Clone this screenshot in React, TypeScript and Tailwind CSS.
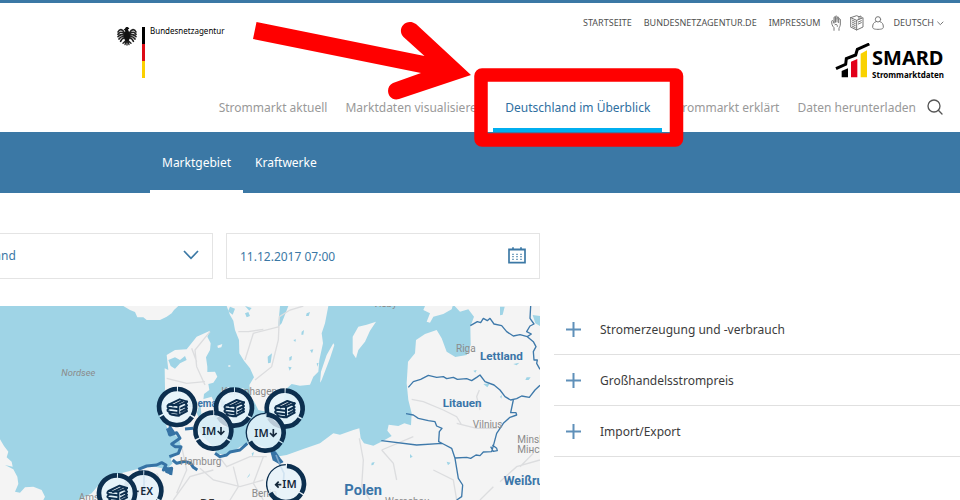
import React from "react";

const FONT = "font-['Noto_Sans','Open_Sans',sans-serif]";

function FederalLogo() {
  return (
    <a href="#bnetza" className="flex items-start pt-[23px] pl-[117px] text-black" aria-label="Bundesnetzagentur">
      <svg width="20" height="20" viewBox="0 0 60 60" aria-hidden="true">
        <g fill="none" stroke="#222" strokeWidth="5" strokeLinecap="round">
          <path d="M22 20C16 8 8 8 3 18M22 24C14 16 8 18 3 25M22 28C14 23 8 26 3 32M22 32C15 30 10 33 6 39M23 36C17 36 13 40 11 46" />
          <path d="M38 20C44 8 52 8 57 18M38 24C46 16 52 18 57 25M38 28C46 23 52 26 57 32M38 32C45 30 50 33 54 39M37 36C43 36 47 40 49 46" />
          <path d="M26 44L18 52M34 44L42 52M30 44V57M27 46L24 56M33 46L36 56" strokeWidth="4" />
        </g>
        <path d="M24 8C25 2 34 1 37 8L33 10 35 16C41 24 40 38 34 46H26C20 38 19 24 25 16L20 10Z" fill="#111" />
      </svg>
      <span className="mt-px ml-[5px] flex h-[51px] w-[3px] flex-col">
        <span className="flex-1 bg-black" />
        <span className="flex-1 bg-[#dd0b15]" />
        <span className="flex-1 bg-[#fbd000]" />
      </span>
      <span className="ml-[5px] text-[8px] leading-[10px]">Bundesnetzagentur</span>
    </a>
  );
}

function SmardLogo() {
  return (
    <a href="#start" className="mt-[10px] flex h-9 text-black">
      <svg width="36" height="36" viewBox="0 0 108 108" aria-hidden="true">
        <path d="M20 84L39 76V103H20Z" fill="#000" />
        <path d="M48 56L67 48V103H48Z" fill="#e2001a" />
        <path d="M77 32L96 22V103H77Z" fill="#f9d200" />
        <path d="M3 77L32 64L34 47L62 36L67 19L103 3" fill="none" stroke="#000" strokeWidth="9" />
      </svg>
      <span className="flex flex-col pt-0.5 pl-px font-bold">
        <span className="text-[20px] leading-[25px]">SMARD</span>
        <span className="text-[8px] leading-[9px]">Strommarktdaten</span>
      </span>
    </a>
  );
}

function UtilityBar() {
  const icon = { fill: "none", stroke: "#777", strokeWidth: 3, strokeLinejoin: "round" as const, strokeLinecap: "round" as const };
  return (
    <nav aria-label="Service" className="mt-2.5 flex h-5 items-center text-[9px] text-[#505050]">
      <a href="#startseite">STARTSEITE</a>
      <a href="#agentur" className="ml-3">BUNDESNETZAGENTUR.DE</a>
      <a href="#impressum" className="ml-3">IMPRESSUM</a>
      <a href="#gebaerden" aria-label="Gebärdensprache" className="ml-2.5">
        <svg width="11" height="16" viewBox="0 0 33 48" {...icon}>
          <path d="M9 46V38C3 32 2 26 2 19C2 16 6 16 7 19L9 25V8C9 5 13 5 13 8V22M13 20V5C13 2 18 2 18 5V21M18 12C18 4 23 4 23 9V23M23 14C24 9 28 10 28 15V27C28 34 25 36 24 40V46M12 29C17 26 19 29 19 34" />
        </svg>
      </a>
      <a href="#leicht" aria-label="Leichte Sprache" className="ml-2">
        <svg width="14" height="16" viewBox="0 0 42 48" {...icon}>
          <path d="M2 8L20 16V45L2 36ZM20 16L39 8V36L20 45M2 8L20 2L27 5V13M27 5L33 3V11M6 15L16 20M6 21L16 26M6 27L16 32M6 33L16 38M25 21L34 17M25 27L34 23" />
        </svg>
      </a>
      <a href="#konto" aria-label="Benutzerkonto" className="ml-2">
        <svg width="12" height="16" viewBox="0 0 36 48" {...icon}>
          <circle cx="18" cy="13" r="8" />
          <path d="M12 20C5 22 2 27 2 36C2 41 6 43 18 43C30 43 34 41 34 36C34 27 31 22 24 20" />
        </svg>
      </a>
      <button type="button" className="ml-2.5 flex items-center gap-[3px]">
        DEUTSCH
        <svg width="7" height="5" viewBox="0 0 21 15" {...icon}><path d="M2 3L10 11L18 3" /></svg>
      </button>
    </nav>
  );
}

function Annotation() {
  return (
    <svg className="pointer-events-none absolute top-0 right-0 z-10" width="960" height="150" viewBox="0 0 960 150" aria-hidden="true">
      <path d="M256.500 22L424.500 56L403.500 37C396 29 406 17 416 24L471 75L399 99C388 102 384 87 393 83L421 73L253 39Z" fill="#f00" />
      <rect x="481" y="75" width="195.500" height="65" rx="1" fill="none" stroke="#f00" strokeWidth="13.500" strokeLinejoin="round" />
    </svg>
  );
}

function MainNav() {
  const items = ["Strommarkt aktuell", "Marktdaten visualisieren", "Deutschland im Überblick", "Strommarkt erklärt", "Daten herunterladen"];
  return (
    <nav aria-label="Hauptmenü" className="flex h-[53px] justify-end pr-[17px] text-[12px] text-[#999]">
      {items.map((t, i) => (
        <a
          key={t}
          href={"#" + i}
          className={
            i === 2
              ? "flex items-center border-b-4 border-[#00aeef] px-3 pt-2 whitespace-nowrap text-[#2f6f9f]"
              : "flex items-center border-b-4 border-transparent px-[9px] pt-2 whitespace-nowrap"
          }
        >
          {t}
        </a>
      ))}
      <button type="button" aria-label="Suche" className="ml-0.5 pt-0.5">
        <svg width="16" height="16" viewBox="0 0 48 48" fill="none" stroke="#555" strokeWidth="4" strokeLinecap="round">
          <circle cx="21" cy="21" r="18" />
          <path d="M34 34L45 45" />
        </svg>
      </button>
    </nav>
  );
}

const RING = "#0c2f4f";

function Marker({ x, y, kind, thin }: { x: number; y: number; kind: "book" | "im" | "imleft" | "ex"; thin?: boolean }) {
  return (
    <g transform={`translate(${x} ${y})`}>
      <circle r="58" fill="#e6f3fa" fillOpacity={kind === "book" ? 0.94 : 0.8} />
      <circle r="54" fill="none" stroke={RING} strokeWidth="14" pathLength="360" strokeDasharray={thin ? "116 4 116 124" : "115 5"} transform="rotate(-87)" />
      {thin && <circle r="58" fill="none" stroke={RING} strokeWidth="4" pathLength="360" strokeDasharray="116 244" transform="rotate(153)" />}
      {kind === "book" && (
        <g fill="none" stroke="#0c2f4f" strokeWidth="6" strokeLinejoin="round" strokeLinecap="round">
          <path d="M-25 -7L8 -23L30 -16L4 -5Z" fill="#fff" />
          <path d="M-25 -7C-32 -2 -28 3 -22 3L0 6M-25 5C-32 10 -28 14 -22 14L0 17M-22 14C-26 21 -18 24 6 26M4 -5V26L30 12M30 -16L24 -12M12 4L30 -5M12 14L30 4M30 -16L26 -10L30 -5L26 0L30 4L27 8L30 12" />
          <path d="M-12 -4L16 -18" />
        </g>
      )}
      {kind === "im" && (
        <>
          <text x="-34" y="12" fontSize="33" fill="#15293c" fontWeight="600">IM</text>
          <path d="M23 -11V10M13 1L23 11L33 1" fill="none" stroke="#15293c" strokeWidth="5" />
        </>
      )}
      {kind === "imleft" && (
        <>
          <text x="-11" y="13" fontSize="33" fill="#15293c" fontWeight="600">IM</text>
          <path d="M-14 2H-31M-22 -7L-31 2L-22 11" fill="none" stroke="#15293c" strokeWidth="5" />
        </>
      )}
      {kind === "ex" && (
        <>
          <text x="-9" y="13" fontSize="32" fill="#15293c" fontWeight="600">EX</text>
          <path d="M-30 2H-14" stroke="#15293c" strokeWidth="5" />
        </>
      )}
    </g>
  );
}

function EuropeMap() {
  return (
    <svg className="mt-0.5 block w-full bg-[#9fd4e6]" viewBox="0 18 1620 582" role="img" aria-label="Karte der Marktgebiete">
      <g fill="#f4f4f4">
        <path d="M370 18L390 30L405 36L412 52L430 52L440 60L480 60L500 50L515 40L522 30L535 18Z" />
        <path d="M0 418L12 438L25 455L20 472L35 485L38 500L15 495L40 508L52 530L55 552L45 575L60 578L75 562L100 560L125 570L135 590L130 600H0Z" />
        <path d="M630 92L622 110L632 130L630 150L618 172L622 200L622 216L645 215L652 230L640 248L625 252L628 270L612 282L610 300L598 315L590 340L600 360L590 385L610 410L640 440L650 462L690 462L720 440L750 425L790 440L812 450L828 470L860 465L910 447L960 430L1000 400L1020 404L1060 390L1078 385L1082 415L1092 430L1120 437L1150 422L1175 408L1162 392L1166 374L1195 378L1213 370L1233 376L1235 340L1225 300L1220 250L1224 185L1245 160L1248 120L1275 102L1310 90L1325 115L1340 155L1366 171L1400 165L1412 135L1411 80L1422 50L1405 28L1380 35L1364 18H1620V600H235L275 580L300 550L340 525L375 517L410 508L455 498L500 508L518 490L512 478L530 460L543 440L537 415L512 395L500 380L492 330L495 265L494 205L505 210L500 165L525 150L560 148L590 110Z" />
        <path d="M680 18L690 45L700 62L705 90L717 120L718 160L732 182L750 205L762 232L748 255L752 290L765 310L775 330L800 335L850 322L855 270L875 252L900 257L930 254L940 230L955 215L958 180L969 130L965 100L975 70L985 18Z" />
        <path d="M666 270L685 262L700 270L730 265L745 290L738 325L720 345L690 365L660 340L650 300ZM600 300L635 290L648 320L640 350L605 350ZM660 370L695 368L690 380L665 382Z" />
        <path d="M1058 110L1075 80L1100 74L1128 65L1110 92L1095 125L1075 150L1068 175L1058 160ZM1000 130L1003 135L990 175L965 240L960 248L963 215L980 165Z" />
        <path d="M1275 18L1270 30L1290 40L1280 65L1290 68L1300 50L1330 42L1355 28L1358 18ZM652 137L667 132L664 142L654 144ZM685 196H691V200H685Z" />
      </g>
      <g fill="#9fd4e6">
        <path d="M505 180L525 172L540 180L555 168L560 180L540 190L525 206L512 198ZM840 18L865 18L845 70L834 82ZM803 170L816 160L812 188L804 190ZM1500 20H1514L1508 44L1500 46ZM1598 45L1620 48V78L1606 70ZM1580 232L1592 232L1586 240L1576 240ZM868 172L876 168L874 180L868 182ZM905 95L912 90L910 104L904 104ZM740 535L750 520L748 528ZM930 150L940 148L936 160ZM865 200L875 202L869 212ZM920 40L930 36L926 48L918 48ZM735 40L745 36L750 48L740 52ZM1115 488L1124 486L1120 495L1114 496ZM1340 485L1352 488L1344 496ZM1230 462L1238 470L1230 474ZM690 20L705 26L698 44L684 34Z" />
        <path d="M735 18L755 24L748 32ZM880 120L888 118L886 126ZM950 190L956 188L952 200ZM1420 212L1430 210L1426 218ZM1450 252L1470 250L1462 262ZM1540 192L1558 188L1550 196ZM1500 290L1506 285L1504 296ZM755 460L762 456L758 470Z" />
      </g>
      <g fill="none" stroke="#dcdddf" strokeWidth="4">
        <path d="M735 180L760 100L838 80M715 95L745 95L790 88M765 240L815 200L835 120L838 50L870 30L910 18M630 95L585 150L590 200L615 255M500 235L560 250L615 245M575 145L590 185" />
        <path d="M545 440L560 510L530 580M600 505L640 540L720 560L790 540M640 510L570 530L520 600M650 460L680 500L750 470L800 470M470 520L490 560L480 600M790 470L760 550L790 600M700 500L715 560L690 600M440 540L400 600" />
        <path d="M1235 298L1270 305L1330 330L1370 350L1385 375M1370 370L1430 385L1490 385M1440 330L1430 290L1438 270M1078 415L1090 480L1085 560L1110 600M1145 450L1180 490L1190 540M1145 450L1240 410M1500 545L1550 500L1620 480M1480 560L1440 600M1560 500L1600 460M1300 510L1360 540L1370 600" />
      </g>
      <g fill="none" stroke="#3e79aa" strokeWidth="4" strokeLinejoin="round">
        <path d="M1411 77L1432 65L1442 68L1450 55L1462 62L1470 55L1482 72L1505 77L1520 95L1540 108L1560 104L1582 110L1594 102L1580 95L1590 78L1602 72L1590 55L1592 18M1582 110L1600 125L1608 140L1600 155L1602 180L1612 180L1610 190L1620 208" />
        <path d="M1225 262L1240 245L1262 238L1285 226L1310 232L1330 230L1340 236L1360 232L1372 238L1400 236L1415 242L1430 232L1440 225L1455 245L1482 255L1500 270L1515 290L1532 300L1550 296L1565 288L1588 292L1605 270L1620 256" />
        <path d="M1218 341L1240 345L1255 355L1285 362L1305 365L1310 378L1326 385L1318 395L1316 425L1330 432L1355 445L1365 475L1375 535L1388 555L1385 590L1370 600M1144 422L1250 435L1326 430M1365 474L1400 472L1412 475L1428 465L1440 467L1450 456L1475 455L1482 430L1490 400L1510 370L1530 352L1550 345L1548 338L1532 338L1540 300M1477 435L1490 445L1492 452L1480 454L1472 440" />
      </g>
      <g fill="none" stroke="#3673a5" strokeWidth="9" strokeLinejoin="round">
        <path d="M502 385L510 405L530 398L540 415L515 432L525 440L543 440L535 460L508 470M415 508L440 498L470 495L485 488L498 495L490 510L515 505L512 525M555 387L580 385M518 480L530 490L555 484L572 490L580 502L592 510M645 460L660 470L680 465L690 456L720 450L742 430" />
        <path d="M510 382L520 396L508 402ZM498 505L510 510L508 518L500 515Z" />
        <path d="M812 450L826 456L840 476L848 486L838 490L820 480Z" fill="#3673a5" strokeWidth="4" />
      </g>
      <path d="M828 465L840 495L852 520L850 550M432 510V570" fill="none" stroke="#7ea7ca" strokeWidth="5" />
      <g className="font-['Roboto',sans-serif]" fill="#8b8b8b" fontSize="30">
        <text x="184" y="227" fontSize="28" fontStyle="italic">Nordsee</text>
        <text x="664" y="286">Kopenhagen</text>
        <text x="540" y="496">Hamburg</text>
        <text x="755" y="590">Berlin</text>
        <text x="236" y="604">Amsterdam</text>
        <text x="1368" y="156">Riga</text>
        <text x="1418" y="384">Vilnius</text>
        <text x="1552" y="430">Minsk</text>
        <text x="1552" y="460">Мінск</text>
        <text x="1118" y="22">Visby</text>
        <text x="1155" y="616">Warschau</text>
      </g>
      <g className="font-['Roboto',sans-serif]" fill="#3a75a8" fontWeight="700" fontSize="35">
        <text x="540" y="320" fontSize="30">Dänemark</text>
        <text x="1440" y="180">Lettland</text>
        <text x="1328" y="321">Litauen</text>
        <text x="1033" y="584" fontSize="44">Polen</text>
        <text x="1511" y="555" fontSize="37">Weißrussland</text>
      </g>
      <text x="600" y="622" fontSize="34" fill="#333" fontWeight="700">DE</text>
      <g>
        <Marker x={531} y={321} kind="book" />
        <Marker x={702} y={323} kind="book" />
        <Marker x={854} y={326} kind="book" />
        <Marker x={640} y={392} kind="im" />
        <Marker x={797} y={398} kind="im" thin />
        <Marker x={430} y={572} kind="ex" />
        <Marker x={351} y={580} kind="book" />
        <Marker x={858} y={552} kind="imleft" thin />
      </g>
    </svg>
  );
}

export default function App() {
  const rows = ["Stromerzeugung und -verbrauch", "Großhandelsstrompreis", "Import/Export"];
  return (
    <div className={`${FONT} relative overflow-hidden bg-white text-[12px]`}>
      <Annotation />
      <header className="border-t-3 border-[#3b78a5]">
        <div className="flex h-[76px] justify-between pr-4">
          <FederalLogo />
          <div className="flex flex-col items-end">
            <UtilityBar />
            <SmardLogo />
          </div>
        </div>
        <MainNav />
      </header>
      <nav aria-label="Untermenü" className="flex h-[61px] bg-[#3b78a5] pl-[150px] text-white">
        <a href="#markt" className="flex items-center border-b-3 border-white px-3 pt-1">Marktgebiet</a>
        <a href="#kraft" className="flex items-center border-b-3 border-transparent px-3 pt-1">Kraftwerke</a>
      </nav>
      <main>
        <div className="grid grid-cols-[9fr_7fr] pt-10 text-[#3b78a5]">
          <div className="grid grid-cols-[213fr_314fr] gap-[13px]">
            <label className="relative block">
              <span className="sr-only">Land</span>
              <span className="block overflow-hidden">
                <select className="-ml-16 block h-[46px] w-[calc(100%+4rem)] appearance-none border border-[#e4e4e4] bg-white pl-2">
                  <option>Deutschland</option>
                </select>
              </span>
              <svg className="pointer-events-none absolute top-[17px] right-3.5" width="16" height="10" viewBox="0 0 48 30" fill="none" stroke="#3b78a5" strokeWidth="5">
                <path d="M3 3L24 25L45 3" />
              </svg>
            </label>
            <label className="relative block">
              <span className="sr-only">Datum</span>
              <input type="text" defaultValue="11.12.2017 07:00" className="block h-[46px] w-full border border-[#e4e4e4] bg-white px-[13px]" />
              <svg className="pointer-events-none absolute top-3.5 right-3.5" width="18" height="17" viewBox="0 0 54 51" fill="none" stroke="#3b78a5" strokeWidth="5">
                <path d="M3 7H51V47H3ZM15 1V9M39 1V9M3 8H51" />
                <path d="M13 22H41M13 29H41M13 37H41" strokeWidth="4" strokeDasharray="4 8" />
              </svg>
            </label>
          </div>
        </div>
        <div className="mt-[25px] grid grid-cols-[9fr_7fr] items-start">
          <EuropeMap />
          <div className="ml-3.5 text-[#3c3c3c]">
            {rows.map((r) => (
              <button key={r} type="button" className="flex h-[51px] w-full items-center border-b border-[#e0e0e0] pl-3 text-left">
                <svg width="15" height="15" viewBox="0 0 15 15" fill="none" stroke="#5f90b9" strokeWidth="2" aria-hidden="true">
                  <path d="M7.500 0V15M0 7.500H15" />
                </svg>
                <span className="pt-0.5 pl-[19px]">{r}</span>
              </button>
            ))}
          </div>
        </div>
      </main>
    </div>
  );
}
